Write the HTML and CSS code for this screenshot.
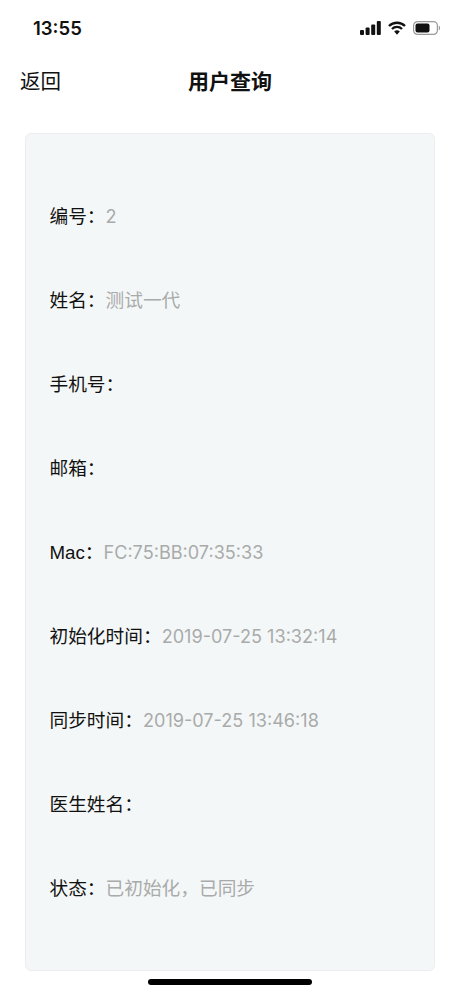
FILE: index.html
```html
<!DOCTYPE html>
<html lang="zh-CN">

<head>
    <meta charset="UTF-8">
    <meta name="viewport" content="width=device-width, initial-scale=1.0">
    <title>用户查询</title>
    <link rel="stylesheet" href="styles.css">
</head>

<body>
    <div class="status-bar">
        <span class="time">13:55</span>
        <div class="status-icons">
            <svg class="signal" width="21" height="14" viewBox="0 0 21 14">
                <rect x="0" y="9" width="4" height="5" rx="1" />
                <rect x="5.6" y="6.5" width="4" height="7.5" rx="1" />
                <rect x="11.2" y="3.5" width="4" height="10.5" rx="1" />
                <rect x="16.8" y="0" width="4" height="14" rx="1" />
            </svg>
            <svg width="18" height="14" viewBox="0 0 18 14">
                <path d="M1 5 A11.5 11.5 0 0 1 17 5" class="wifi" />
                <path d="M4 8 A7 7 0 0 1 14 8" class="wifi" />
                <path d="M6.2 10.6 L9 13.8 L11.8 10.6 A4 4 0 0 0 6.2 10.6 Z" />
            </svg>
            <svg width="28" height="14" viewBox="0 0 28 14">
                <rect x="0.6" y="0.6" width="23.8" height="12.8" rx="4" class="battery-shell" />
                <rect x="2.5" y="2.5" width="14" height="9" rx="2" />
                <path d="M25.8 4.5 A3 3 0 0 1 25.8 9.5 Z" class="battery-cap" />
            </svg>
        </div>
    </div>

    <div class="nav-bar">
        <span class="back">返回</span>
        <span class="title">用户查询</span>
    </div>

    <div class="card">
        <div class="row"><span class="label">编号：</span><span class="value latin">2</span></div>
        <div class="row"><span class="label">姓名：</span><span class="value">测试一代</span></div>
        <div class="row"><span class="label">手机号：</span></div>
        <div class="row"><span class="label">邮箱：</span></div>
        <div class="row"><span class="label">Mac：</span><span class="value latin">FC:75:BB:07:35:33</span></div>
        <div class="row"><span class="label">初始化时间：</span><span class="value latin">2019-07-25 13:32:14</span></div>
        <div class="row"><span class="label">同步时间：</span><span class="value latin">2019-07-25 13:46:18</span></div>
        <div class="row"><span class="label">医生姓名：</span></div>
        <div class="row"><span class="label">状态：</span><span class="value">已初始化，已同步</span></div>
    </div>

    <div class="home-bar"></div>
</body>

</html>
```

FILE: styles.css
```css
:root {
    --card-color: #f4f7f7;
    --card-border: #ebeeee;
    --value-color: #a9abab;
}

body {
    margin: 0;
    height: 996px;
    background-color: #fff;
    color: #111;
    font-family: "Liberation Sans", "Noto Sans CJK SC", sans-serif;
    overflow: hidden;
}

.status-bar {
    display: flex;
    justify-content: space-between;
    align-items: center;
    height: 56px;
    padding: 0 19px 0 33px;
}

.time {
    font-family: Inter, "Liberation Sans", sans-serif;
    font-size: 18.5px;
    font-weight: 600;
}

.status-icons {
    display: flex;
    align-items: center;
    gap: 7px;
}

.status-icons svg {
    fill: #111;
}

.status-icons .wifi {
    fill: none;
    stroke: #111;
    stroke-width: 2.4;
}

.status-icons .battery-shell {
    fill: none;
    stroke: #999;
    stroke-width: 1.2;
}

.status-icons .battery-cap {
    fill: #999;
}

.nav-bar {
    position: relative;
    display: flex;
    justify-content: center;
    align-items: center;
    height: 48px;
}

.back {
    position: absolute;
    left: 20px;
    font-size: 20.5px;
}

.title {
    font-size: 21px;
    font-weight: bold;
}

.card {
    display: flex;
    flex-direction: column;
    justify-content: center;
    gap: 56px;
    box-sizing: border-box;
    height: 838px;
    margin: 29px 25px 0;
    padding: 0 23.5px 2px;
    background-color: var(--card-color);
    border: 1px solid var(--card-border);
    border-radius: 6px;
}

.row {
    display: flex;
    align-items: baseline;
    height: 28px;
    font-size: 18.7px;
    white-space: nowrap;
}

.value {
    color: var(--value-color);
}

.latin {
    font-family: Inter, "Liberation Sans", sans-serif;
    font-size: 18.1px;
}

.home-bar {
    width: 164px;
    height: 6px;
    margin: 8px auto 0;
    background-color: #000;
    border-radius: 3px;
}
```
